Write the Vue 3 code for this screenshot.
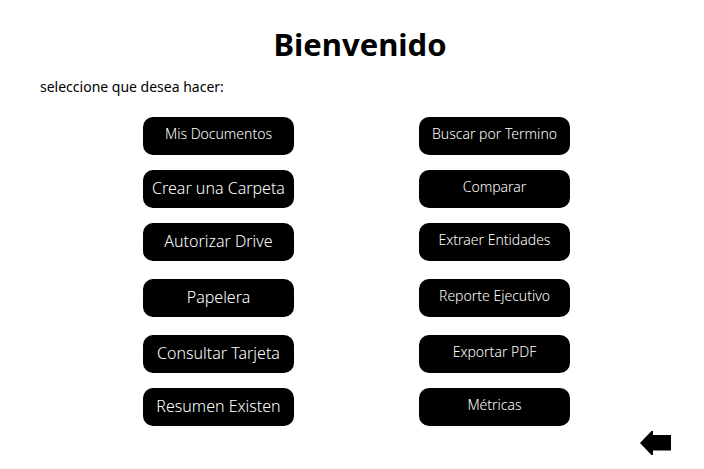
<script setup>
const groups = [
  [
    { label: 'Mis Documentos', small: true },
    { label: 'Buscar por Termino', small: true },
    { label: 'Crear una Carpeta' },
    { label: 'Comparar', small: true },
    { label: 'Autorizar Drive' },
    { label: 'Extraer Entidades', small: true },
  ],
  [
    { label: 'Papelera' },
    { label: 'Reporte Ejecutivo', small: true },
  ],
  [
    { label: 'Consultar Tarjeta' },
    { label: 'Exportar PDF', small: true },
    { label: 'Resumen Existen' },
    { label: 'Métricas', small: true },
  ],
]
</script>

<template>
  <main class="page">
    <h1 class="title">Bienvenido</h1>
    <p class="prompt">seleccione que desea hacer:</p>
    <nav class="menu">
      <div v-for="(group, i) in groups" :key="i" class="group">
        <button
          v-for="item in group"
          :key="item.label"
          type="button"
          class="option"
          :class="{ small: item.small }"
        >{{ item.label }}</button>
      </div>
    </nav>
    <footer class="footer">
      <button type="button" class="back" aria-label="Volver">
        <svg width="32" height="24" viewBox="0 0 32 24" aria-hidden="true">
          <path d="M0 12 L11.5 0 H13 V4 H31 V19.5 H13 V24 H11.5 Z" />
        </svg>
      </button>
    </footer>
  </main>
</template>

<style>
body {
  margin: 0;
  background: #fff;
}
</style>

<style scoped>
.page {
  box-sizing: border-box;
  min-height: 100vh;
  display: flex;
  flex-direction: column;
  padding-top: 22px;
  border-bottom: 1px solid #f3f3f3;
  font-family: "Noto Sans", "Open Sans", sans-serif;
  color: #000;
}
.title {
  margin: 0;
  padding-left: 16px;
  font-size: 31px;
  line-height: 44px;
  font-weight: 700;
  text-align: center;
}
.prompt {
  margin: 10px 40px 0;
  font-size: 14px;
  line-height: 22px;
}
.menu {
  display: flex;
  flex-direction: column;
  gap: 18px;
  padding: 19px 0 0 9px;
}
.group {
  display: grid;
  grid-template-columns: 151px 151px;
  justify-content: center;
  gap: 15px 125px;
}
.option {
  height: 38px;
  padding: 0 0 2px;
  border: 0;
  border-radius: 10px;
  background: #000;
  color: #fff;
  font-family: inherit;
  font-size: 16px;
  font-weight: 300;
  white-space: nowrap;
  cursor: pointer;
}
.option.small {
  padding-bottom: 6px;
  font-size: 14px;
}
.footer {
  display: flex;
  justify-content: flex-end;
  padding: 5px 32px 0;
}
.back {
  display: flex;
  padding: 0;
  border: 0;
  background: none;
  cursor: pointer;
}
</style>
